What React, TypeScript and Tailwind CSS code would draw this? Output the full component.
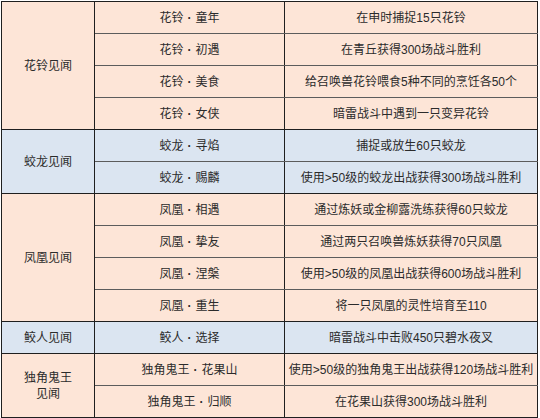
import React from 'react'

type Item = { name: string; task: string }
type Group = { title: string[]; tone: 'pink' | 'blue'; items: Item[] }

const groups: Group[] = [
  {
    title: ['花铃见闻'],
    tone: 'pink',
    items: [
      { name: '花铃 · 童年', task: '在申时捕捉15只花铃' },
      { name: '花铃 · 初遇', task: '在青丘获得300场战斗胜利' },
      { name: '花铃 · 美食', task: '给召唤兽花铃喂食5种不同的烹饪各50个' },
      { name: '花铃 · 女侠', task: '暗雷战斗中遇到一只变异花铃' },
    ],
  },
  {
    title: ['蛟龙见闻'],
    tone: 'blue',
    items: [
      { name: '蛟龙 · 寻焰', task: '捕捉或放生60只蛟龙' },
      { name: '蛟龙 · 赐麟', task: '使用>50级的蛟龙出战获得300场战斗胜利' },
    ],
  },
  {
    title: ['凤凰见闻'],
    tone: 'pink',
    items: [
      { name: '凤凰 · 相遇', task: '通过炼妖或金柳露洗练获得60只蛟龙' },
      { name: '凤凰 · 挚友', task: '通过两只召唤兽炼妖获得70只凤凰' },
      { name: '凤凰 · 涅槃', task: '使用>50级的凤凰出战获得600场战斗胜利' },
      { name: '凤凰 · 重生', task: '将一只凤凰的灵性培育至110' },
    ],
  },
  {
    title: ['鲛人见闻'],
    tone: 'blue',
    items: [{ name: '鲛人 · 选择', task: '暗雷战斗中击败450只碧水夜叉' }],
  },
  {
    title: ['独角鬼王', '见闻'],
    tone: 'pink',
    items: [
      { name: '独角鬼王 · 花果山', task: '使用>50级的独角鬼王出战获得120场战斗胜利' },
      { name: '独角鬼王 · 归顺', task: '在花果山获得300场战斗胜利' },
    ],
  },
]

function Name({ value }: { value: string }) {
  const [left, right] = value.split(' · ')
  return (
    <>
      {left}
      <span className="px-[4px] font-bold">·</span>
      {right}
    </>
  )
}

export default function App() {
  return (
    <div className="h-[418px] w-[540px] bg-white pl-px pt-px">
      <table
        className="w-[537px] table-fixed border-collapse text-[12px] leading-[16px] text-[#2b2b2b]"
        style={{ fontFamily: '"Liberation Sans", "Noto Sans CJK SC", sans-serif' }}
      >
        <colgroup>
          <col className="w-[93px]" />
          <col className="w-[190px]" />
          <col className="w-[253px]" />
        </colgroup>
        <tbody>
          {groups.map((group) =>
            group.items.map((item, i) => {
              const bg = group.tone === 'pink' ? 'bg-[#fde5d7]' : 'bg-[#dbe5f1]'
              const last = i === group.items.length - 1
              const rowLine = last ? 'border-b-[#1f1f1f]' : 'border-b-[#5c5c5c]'
              return (
                <tr key={item.name} className="h-[32px]">
                  {i === 0 ? (
                    <td
                      rowSpan={group.items.length}
                      className={`border border-[#1f1f1f] ${bg} text-center align-middle`}
                    >
                      {group.title.map((line) => (
                        <div key={line}>{line}</div>
                      ))}
                    </td>
                  ) : null}
                  <td className={`border border-[#1f1f1f] ${rowLine} ${bg} text-center align-middle`}>
                    <Name value={item.name} />
                  </td>
                  <td className={`border border-[#1f1f1f] ${rowLine} ${bg} text-center align-middle`}>
                    {item.task}
                  </td>
                </tr>
              )
            }),
          )}
        </tbody>
      </table>
    </div>
  )
}
